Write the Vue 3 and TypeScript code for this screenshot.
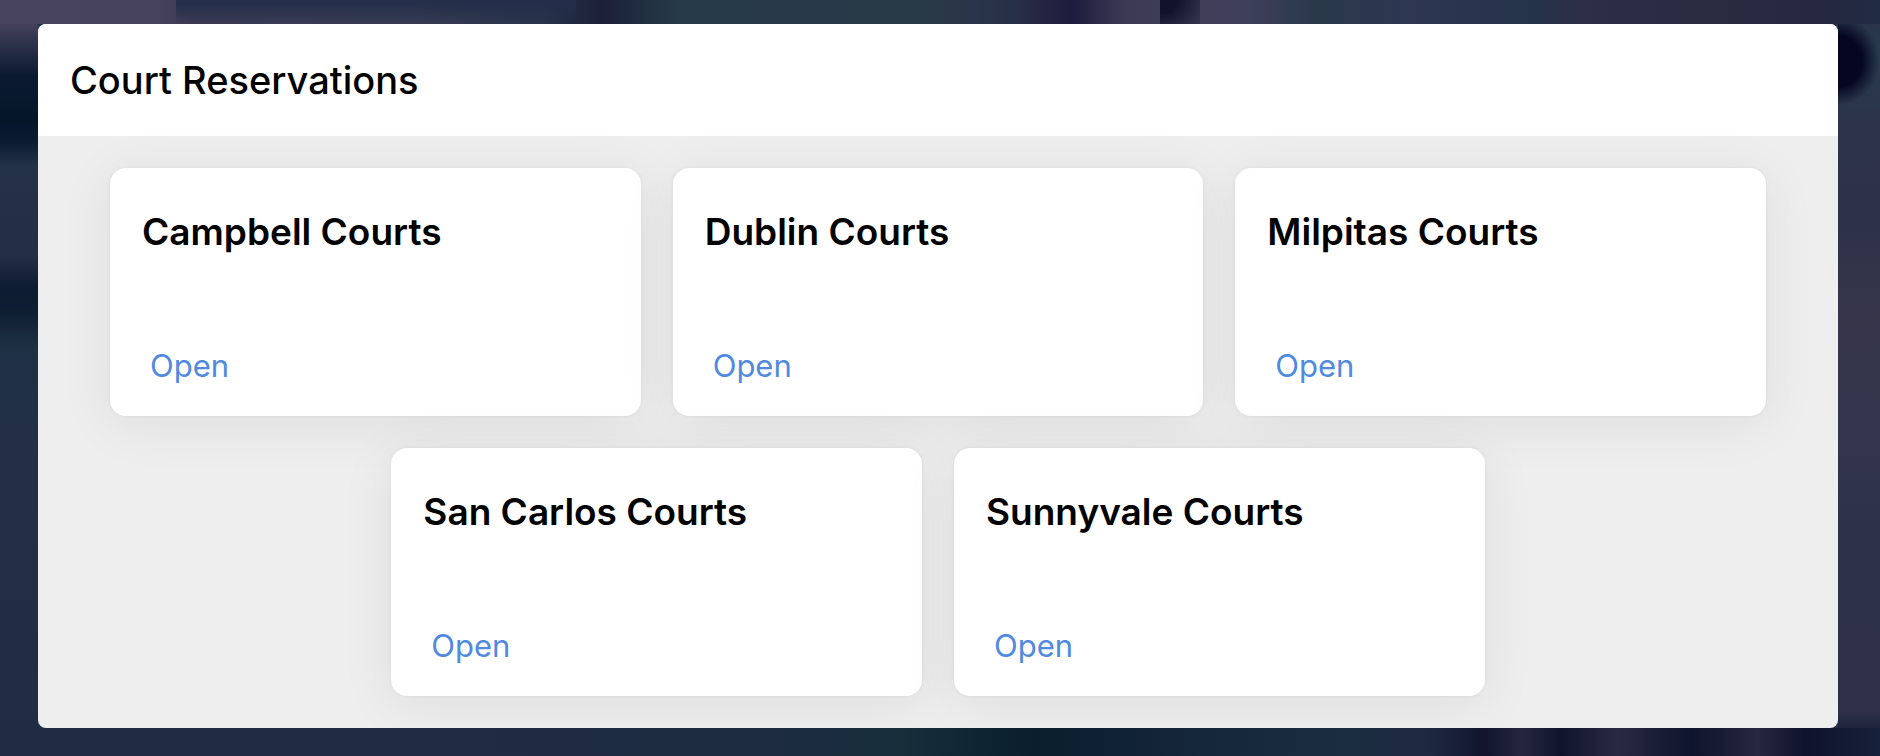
<script setup lang="ts">
interface Court {
  id: string
  name: string
}

const courts: Court[] = [
  { id: 'campbell', name: 'Campbell Courts' },
  { id: 'dublin', name: 'Dublin Courts' },
  { id: 'milpitas', name: 'Milpitas Courts' },
  { id: 'san-carlos', name: 'San Carlos Courts' },
  { id: 'sunnyvale', name: 'Sunnyvale Courts' },
]
</script>

<template>
  <main class="page">
    <section class="panel" aria-labelledby="panel-title">
      <header class="panel-header">
        <h1 id="panel-title" class="panel-title">Court Reservations</h1>
      </header>
      <div class="courts">
        <article v-for="court in courts" :key="court.id" class="card">
          <h2 class="card-title">{{ court.name }}</h2>
          <a class="open" :href="`#${court.id}`" :aria-label="`Open ${court.name}`">Open</a>
        </article>
      </div>
    </section>
  </main>
</template>

<style>
body {
  margin: 0;
}
</style>

<style scoped>
.page {
  box-sizing: border-box;
  min-height: 100vh;
  padding: 24px 42px 28px 38px;
  font-family: Inter, "Liberation Sans", sans-serif;
  color: #000;
  background:
    linear-gradient(180deg, rgba(35, 45, 73, 0.9) 20%, rgba(35, 45, 73, 0) 100%) 176px 0 / 400px 24px no-repeat,
    radial-gradient(ellipse at top left, #11132d 30%, rgba(17, 19, 45, 0) 100%) 1160px 0 / 40px 32px no-repeat,
    linear-gradient(
      90deg,
      #48435f 0%,
      #47425c 8.5%,
      #3b3a54 10%,
      #383c53 22%,
      #28334b 29%,
      #1b2038 32%,
      #263a48 36%,
      #293948 50%,
      #282f48 54%,
      #1e1c3d 57%,
      #3d3b54 60%,
      #403f5b 66%,
      #29394a 70%,
      #2e3652 75%,
      #25334b 81%,
      #2d2e45 85%,
      #25283e 97%,
      #202c44 100%
    ) 0 0 / 100% 24px no-repeat,
    linear-gradient(
      90deg,
      #202c44 0%,
      #1e2c42 40%,
      #162d3a 48%,
      #0a1e2e 55%,
      #15273a 64%,
      #1b2d40 72%,
      #1e2841 76%,
      #10152d 79%,
      #25273f 81%,
      #0f142d 83%,
      #2a2942 86%,
      #0e142d 90%,
      #27273f 93.5%,
      #0f132d 96%,
      #17203a 100%
    ) 0 100% / 100% 28px no-repeat,
    linear-gradient(
      180deg,
      #48435f 0%,
      #46415d 3%,
      #343750 5%,
      #0b1a31 10%,
      #051629 16%,
      #0c1c33 19%,
      #243249 22%,
      #232d46 34%,
      #0d1c33 38%,
      #0e1d30 41%,
      #1d3044 46%,
      #232f47 60%,
      #202c44 100%
    ) 0 0 / 38px 100% no-repeat,
    radial-gradient(ellipse at left, #050621 40%, rgba(5, 6, 33, 0) 70%) 100% 16px / 42px 90px no-repeat,
    linear-gradient(
      180deg,
      #283149 0%,
      #283b4c 8%,
      #2c334b 16%,
      #2e3249 30%,
      #36354a 42%,
      #34364d 55%,
      #2d324a 70%,
      #2e3047 94%,
      #111c33 98%
    ) 100% 0 / 42px 100% no-repeat,
    #232f46;
}

.panel {
  overflow: hidden;
  border-radius: 8px;
  background: #eee;
}

.panel-header {
  padding: 32px;
  background: #fff;
}

.panel-title {
  margin: 0;
  font-size: 38px;
  font-weight: 500;
  line-height: 48px;
}

.courts {
  display: flex;
  flex-wrap: wrap;
  justify-content: center;
  gap: 32px;
  padding: 32px 4%;
}

.card {
  box-sizing: border-box;
  display: flex;
  flex-direction: column;
  align-items: flex-start;
  flex: 0 0 calc((100% - 64px) / 3);
  padding: 40px 32px 30px;
  border-radius: 16px;
  background: #fff;
  box-shadow:
    0 0 4px rgba(0, 0, 0, 0.06),
    0 8px 56px rgba(0, 0, 0, 0.07);
}

.card-title {
  margin: 0 0 90px;
  font-size: 37px;
  font-weight: 600;
  line-height: 48px;
}

.open {
  padding: 0 8px;
  color: #4f8adf;
  font-size: 31px;
  line-height: 40px;
  text-decoration: none;
}
</style>
